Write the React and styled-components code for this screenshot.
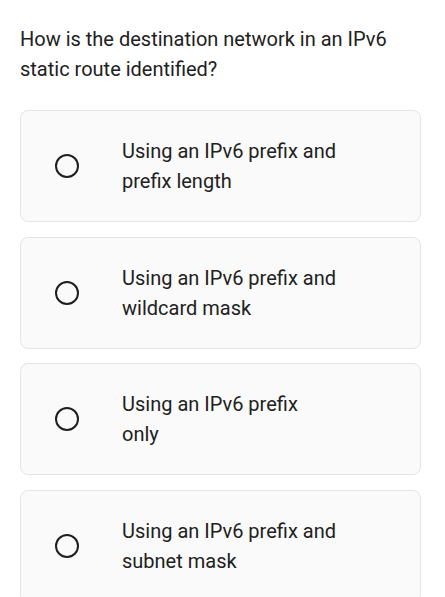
import React from 'react';
import styled, { createGlobalStyle } from 'styled-components';

const GlobalStyle = createGlobalStyle`
  html, body {
    margin: 0;
    padding: 0;
    background: #fff;
  }
  body {
    font-family: Roboto, "Noto Sans", sans-serif;
    -webkit-font-smoothing: antialiased;
  }
`;

const Page = styled.div`
  padding: 24px 24px 0 20px;
  height: 597px;
  overflow: hidden;
  box-sizing: border-box;
`;

const Question = styled.h1`
  margin: 0 0 26px;
  font-size: 20px;
  line-height: 30px;
  font-weight: 400;
  color: #212121;
  padding-right: 30px;
`;

const OptionList = styled.div`
  display: flex;
  flex-direction: column;
  gap: 14.5px;
`;

const OptionCard = styled.label`
  display: flex;
  align-items: center;
  min-height: 112px;
  box-sizing: border-box;
  padding: 0 20px 0 34px;
  background: #fafafa;
  border: 1px solid #e2e5ea;
  border-radius: 8px;
  cursor: pointer;
`;

const Radio = styled.span`
  flex: none;
  width: 24px;
  height: 24px;
  box-sizing: border-box;
  border: 2.5px solid #1f1f1f;
  border-radius: 50%;
  background: ${p => (p.checked ? '#1f1f1f' : 'transparent')};
`;

const OptionText = styled.span`
  margin-left: 43px;
  font-size: 20px;
  line-height: 30px;
  color: #212121;
  max-width: 216px;
`;

const options = [
  'Using an IPv6 prefix and prefix length',
  'Using an IPv6 prefix and wildcard mask',
  'Using an IPv6 prefix only',
  'Using an IPv6 prefix and subnet mask',
];

export default function App() {
  const [picked, setPicked] = React.useState(null);
  return (
    <>
      <GlobalStyle />
      <Page>
        <Question>How is the destination network in an IPv6 static route identified?</Question>
        <OptionList>
          {options.map((text, i) => (
            <OptionCard key={i} onClick={() => setPicked(i)}>
              <Radio checked={picked === i} />
              <OptionText>{text}</OptionText>
            </OptionCard>
          ))}
        </OptionList>
      </Page>
    </>
  );
}
